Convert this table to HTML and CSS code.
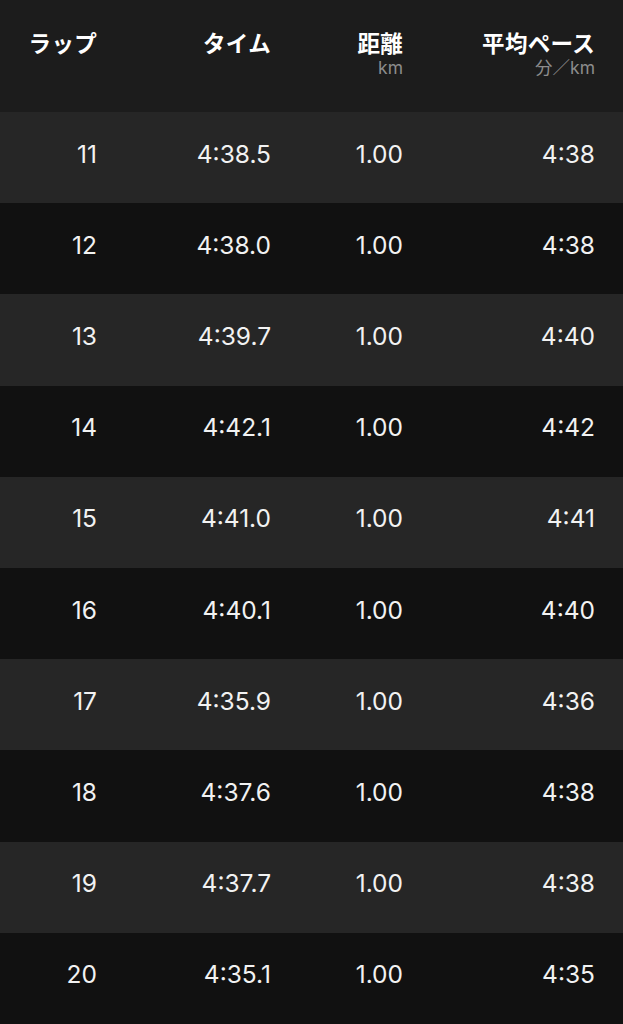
FILE: index.html
```html
<!DOCTYPE html>
<html lang="ja">
<head>
<meta charset="utf-8">
<title>ラップ</title>
<link rel="stylesheet" href="styles.css">
</head>
<body>
<div class="table">
  <div class="head">
    <div class="hcell"><div class="title">ラップ</div></div>
    <div class="hcell"><div class="title">タイム</div></div>
    <div class="hcell"><div class="title">距離</div><div class="sub">km</div></div>
    <div class="hcell"><div class="title">平均ペース</div><div class="sub">分／km</div></div>
  </div>
  <div class="row odd"><span>11</span><span>4:38.5</span><span>1.00</span><span>4:38</span></div>
  <div class="row even"><span>12</span><span>4:38.0</span><span>1.00</span><span>4:38</span></div>
  <div class="row odd"><span>13</span><span>4:39.7</span><span>1.00</span><span>4:40</span></div>
  <div class="row even"><span>14</span><span>4:42.1</span><span>1.00</span><span>4:42</span></div>
  <div class="row odd"><span>15</span><span>4:41.0</span><span>1.00</span><span>4:41</span></div>
  <div class="row even"><span>16</span><span>4:40.1</span><span>1.00</span><span>4:40</span></div>
  <div class="row odd"><span>17</span><span>4:35.9</span><span>1.00</span><span>4:36</span></div>
  <div class="row even"><span>18</span><span>4:37.6</span><span>1.00</span><span>4:38</span></div>
  <div class="row odd"><span>19</span><span>4:37.7</span><span>1.00</span><span>4:38</span></div>
  <div class="row even"><span>20</span><span>4:35.1</span><span>1.00</span><span>4:35</span></div>
</div>
</body>
</html>
```
FILE: styles.css
```css
html, body {
  margin: 0;
  padding: 0;
  background: #111111;
}
body {
  font-family: Inter, "Noto Sans CJK JP", sans-serif;
  color: #f2f2f2;
  width: 623px;
  overflow: hidden;
}
.table {
  display: flex;
  flex-direction: column;
}
.head, .row {
  display: grid;
  grid-template-columns: 97px 174px 132px 192px;
  padding-right: 28px;
}
.head {
  height: 112px;
  box-sizing: border-box;
  padding-top: 28px;
  background: #1c1c1c;
  align-items: start;
}
.hcell {
  text-align: right;
  display: flex;
  flex-direction: column;
  align-items: flex-end;
}
.title {
  font-family: "Noto Sans CJK JP", sans-serif;
  font-weight: 700;
  font-size: 22.5px;
  line-height: 28px;
  color: #ffffff;
  letter-spacing: 0.3px;
}
.sub {
  font-family: Inter, "Noto Sans CJK JP", sans-serif;
  font-size: 17.5px;
  line-height: 20px;
  margin-top: 2px;
  color: #8c8c8c;
}
.row {
  height: 91.2px;
  box-sizing: border-box;
  padding-bottom: 8px;
  align-items: center;
  font-size: 24.5px;
  font-weight: 400;
}
.row span {
  text-align: right;
  line-height: 30px;
}
.odd { background: #262626; }
.even { background: #111111; }
```
